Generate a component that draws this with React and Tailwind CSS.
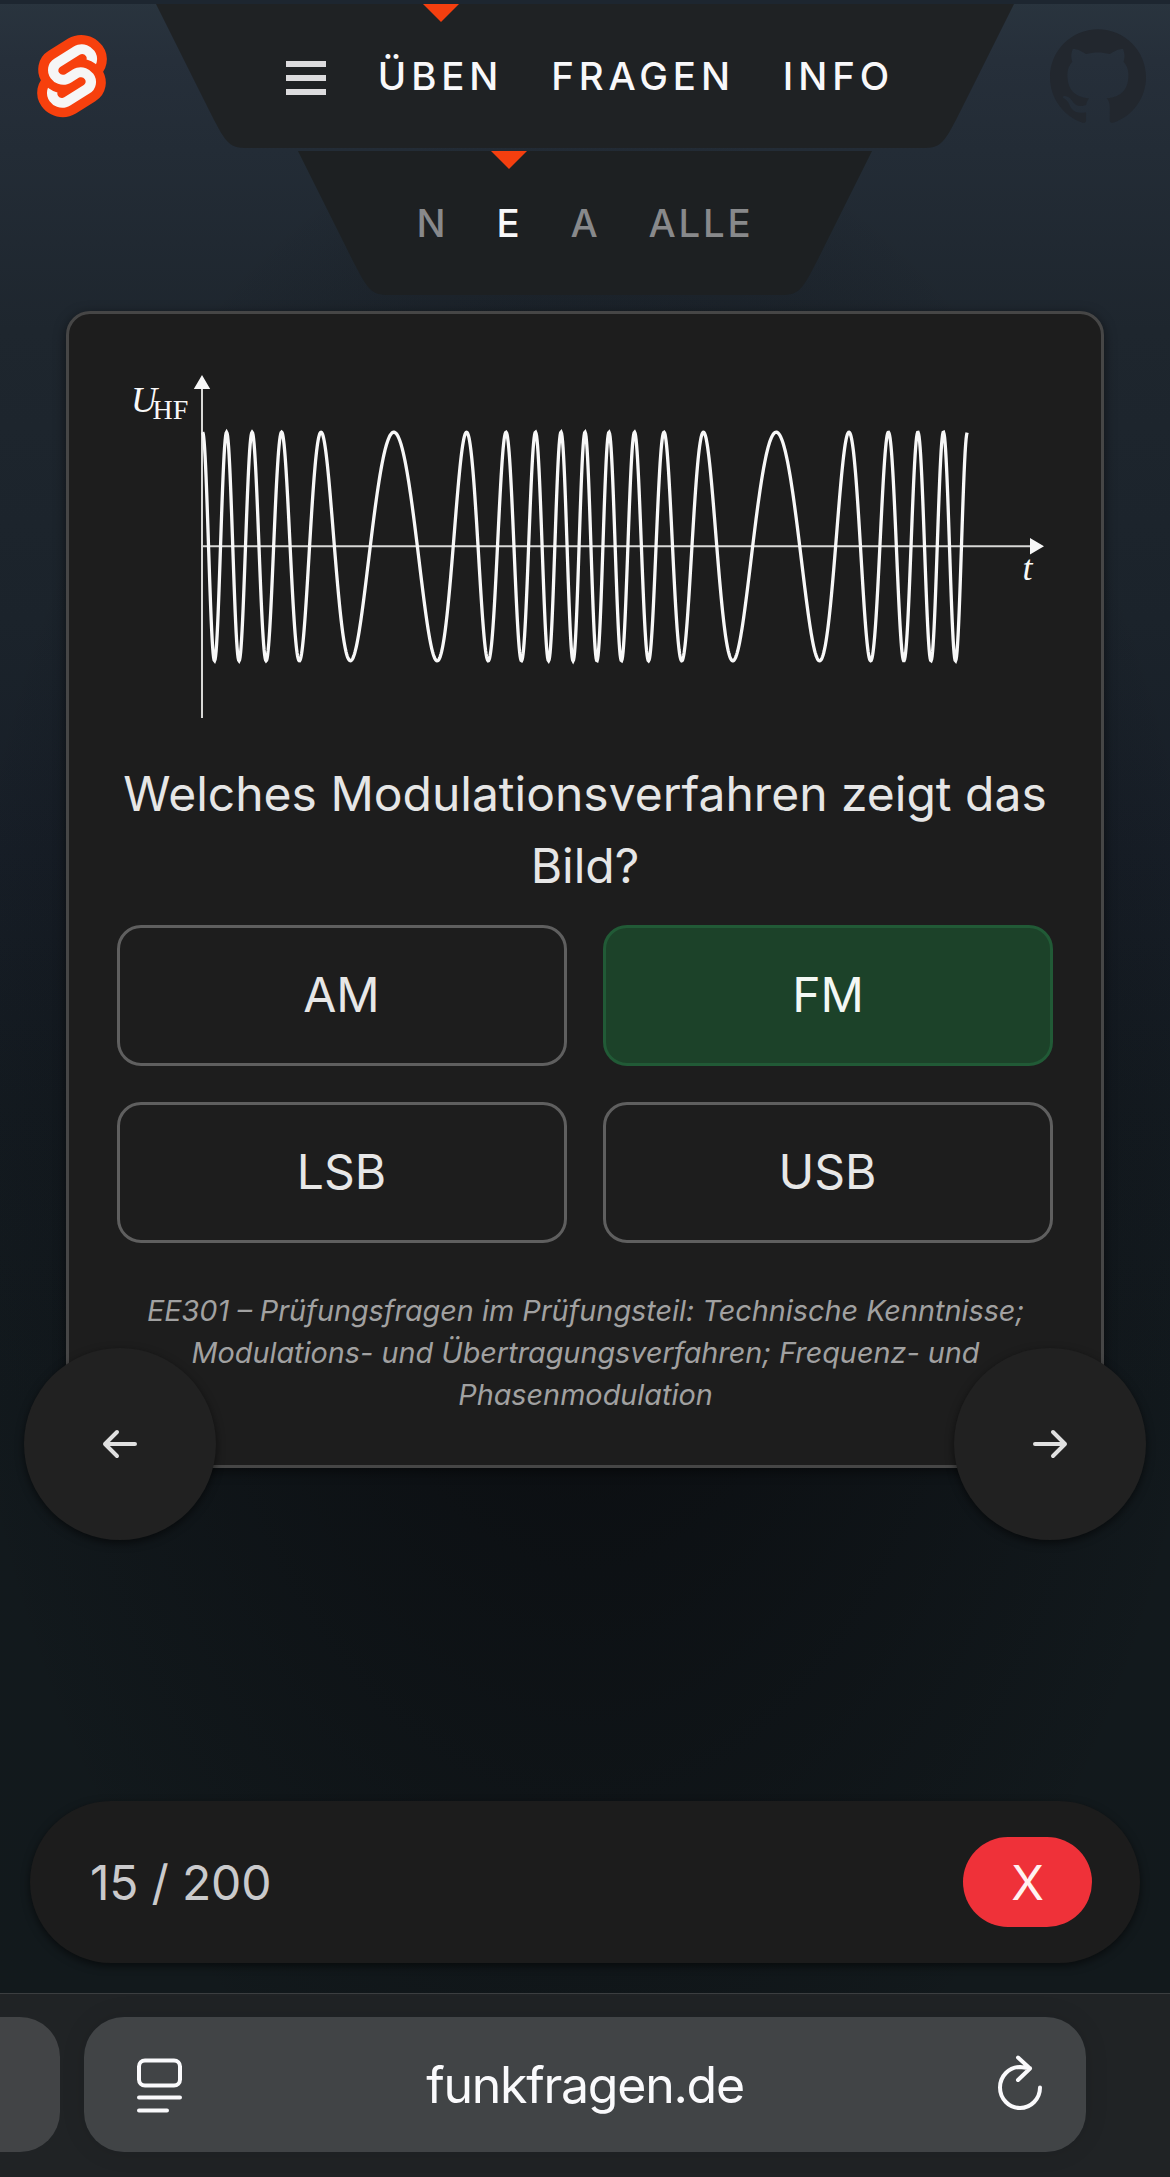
import { SiGithub } from "react-icons/si";

const ORIGIN_X = 202.6;
const PERIOD = 382.4;
const MID_Y = 546.5;
const AMPLITUDE = 114.3;

// Frequency-modulated carrier: ten oscillations per modulation period.
const wavePath = (() => {
  const points = [];
  for (let x = 0; x <= PERIOD * 2; x += 0.5) {
    const u = x / PERIOD;
    const phase = 2 * Math.PI * (10 * u + 0.97 * Math.sin(2 * Math.PI * u));
    points.push(`${(ORIGIN_X + x).toFixed(2)},${(MID_Y - AMPLITUDE * Math.cos(phase)).toFixed(2)}`);
  }
  return "M" + points.join("L");
})();

function SvelteLogo() {
  return (
    <svg viewBox="0 0 107 128" preserveAspectRatio="none" className="h-[94px] w-20">
      <path fill="#f7400d" d="M94.1566,22.8189c-10.4-14.8851-30.94-19.2971-45.7914-9.8348L22.2825,29.6078A29.9234,29.9234,0,0,0,8.7639,49.6506a31.5136,31.5136,0,0,0,3.1076,20.2318A30.0061,30.0061,0,0,0,7.3953,81.0653a31.8886,31.8886,0,0,0,5.4473,24.1157c10.4022,14.8865,30.9423,19.2966,45.7914,9.8348L84.7167,98.3921A29.9177,29.9177,0,0,0,98.2353,78.3493,31.5263,31.5263,0,0,0,95.13,58.117a30,30,0,0,0,4.4743-11.1824,31.88,31.88,0,0,0-5.4473-24.1157" />
      <path fill="#f6f6f6" d="M45.8171,106.5815A20.7182,20.7182,0,0,1,23.58,98.3389a19.1739,19.1739,0,0,1-3.2766-14.5025,18.1886,18.1886,0,0,1,.6233-2.4357l.4912-1.4978,1.3363.9815a33.6443,33.6443,0,0,0,10.203,5.0978l.9694.2941-.0893.9675a5.8474,5.8474,0,0,0,1.052,3.8781,6.2389,6.2389,0,0,0,6.6952,2.485,5.7449,5.7449,0,0,0,1.6021-.7041L69.27,76.281a5.4306,5.4306,0,0,0,2.4506-3.631,5.7948,5.7948,0,0,0-.9875-4.3712,6.2436,6.2436,0,0,0-6.6978-2.4864,5.7427,5.7427,0,0,0-1.6.7036l-9.9532,6.3449a19.0329,19.0329,0,0,1-5.2965,2.3259,20.7181,20.7181,0,0,1-22.2368-8.2427,19.1725,19.1725,0,0,1-3.2766-14.5024,17.9885,17.9885,0,0,1,8.13-12.0513L55.8833,23.7472a19.0038,19.0038,0,0,1,5.3-2.3287A20.7182,20.7182,0,0,1,83.42,29.6611a19.1739,19.1739,0,0,1,3.2766,14.5025,18.4,18.4,0,0,1-.6233,2.4357l-.4912,1.4978-1.3356-.98a33.6175,33.6175,0,0,0-10.2037-5.1l-.9694-.2942.0893-.9675a5.8588,5.8588,0,0,0-1.052-3.878,6.2389,6.2389,0,0,0-6.6952-2.485,5.7449,5.7449,0,0,0-1.6021.7041L37.73,51.719a5.4218,5.4218,0,0,0-2.4487,3.63,5.7862,5.7862,0,0,0,.9856,4.3717,6.2437,6.2437,0,0,0,6.6978,2.4864,5.7652,5.7652,0,0,0,1.602-.7041l9.9519-6.3425a18.978,18.978,0,0,1,5.2959-2.3278,20.7181,20.7181,0,0,1,22.2368,8.2427,19.1725,19.1725,0,0,1,3.2766,14.5024,17.9977,17.9977,0,0,1-8.13,12.0532L51.1167,104.2528a19.0038,19.0038,0,0,1-5.3,2.3287" />
    </svg>
  );
}

function Flank({ right, className }) {
  return (
    <svg viewBox="0 0 2 3" preserveAspectRatio="none" className={"h-36 w-24 shrink-0 " + className}>
      <path
        fill="currentColor"
        d={right ? "M0,0 L0,3 C0.5,3 0.5,3 1,2 L2,0 Z" : "M0,0 L1,2 C1.5,3 1.5,3 2,3 L2,0 Z"}
      />
    </svg>
  );
}

function NavItem({ label, active, muted }) {
  return (
    <li className="relative flex h-full items-center px-6 pt-px">
      {active && (
        <span className="absolute top-0 left-1/2 -ml-[18px] h-0 w-0 border-x-[18px] border-t-[18px] border-x-transparent border-t-[#f43f0f]" />
      )}
      <a className={muted ? "text-[#88898b]" : "text-[#f8f8fa]"}>{label}</a>
    </li>
  );
}

function Answer({ label, correct }) {
  return (
    <button
      className={
        "flex h-[141px] items-center justify-center rounded-3xl border-[3px] pb-[2px] text-[48px] " +
        (correct ? "border-[#215a36] bg-[#1c4229] text-[#f3f8f4]" : "border-[#5f5f5f] pr-px text-[#e7e7e7]")
      }
    >
      {label}
    </button>
  );
}

function RoundButton({ right }) {
  return (
    <button
      className={
        "absolute top-[1348px] flex h-48 w-48 items-center justify-center rounded-full bg-[#212121] shadow-[0_3px_9px_rgba(0,0,0,0.55)] " +
        (right ? "right-6" : "left-6")
      }
    >
      <svg viewBox="0 0 36 32" className="h-8 w-9" fill="none" stroke="#e0e0e0" strokeWidth="4" strokeLinecap="round" strokeLinejoin="round">
        {right ? <path d="M3 16H33M21 4L33 16L21 28" /> : <path d="M33 16H3M15 4L3 16L15 28" />}
      </svg>
    </button>
  );
}

export default function App() {
  return (
    <div className="relative flex h-[2177px] w-[1170px] flex-col overflow-hidden bg-[radial-gradient(640px_1050px_at_50%_1150px,rgba(8,8,11,0.85)_0%,rgba(8,9,12,0.5)_40%,rgba(8,9,12,0)_100%),linear-gradient(180deg,#29343e_0px,#262f3a_60px,#232c36_150px,#1e262e_330px,#1b232b_620px,#171e27_850px,#141b21_1100px,#12191d_1400px,#12191c_2000px)] font-[Inter,sans-serif]">
      <div className="h-1 shrink-0 bg-[#1d2630]" />
      <header className="flex h-36 shrink-0">
        <div className="flex w-36 items-center justify-center">
          <SvelteLogo />
        </div>
        <nav className="ml-3 flex text-[38.4px] font-medium tracking-[4.9px]">
          <Flank className="text-[#1f2224]" />
          <ul className="flex h-36 w-[666px] items-center justify-end bg-[#1f2224]">
            <li className="mr-auto ml-[34px] flex w-10 flex-col gap-2 pt-[3px]">
              <span className="h-1.5 bg-[#dcdcde]" />
              <span className="h-1.5 bg-[#dcdcde]" />
              <span className="h-1.5 bg-[#dcdcde]" />
            </li>
            <NavItem label="ÜBEN" active />
            <NavItem label="FRAGEN" />
            <NavItem label="INFO" />
          </ul>
          <Flank right className="text-[#1f2224]" />
        </nav>
        <div className="mr-6 ml-auto flex w-24 items-center justify-center text-[#22272e]">
          <SiGithub size={96} />
        </div>
      </header>

      <nav className="mt-[3px] flex h-36 shrink-0 justify-center text-[38.4px] font-medium tracking-[2.8px]">
        <Flank className="text-[#1d2022]" />
        <ul className="-mx-px flex h-36 items-center bg-[#1d2022]">
          <NavItem label="N" muted />
          <NavItem label="E" active />
          <NavItem label="A" muted />
          <NavItem label="ALLE" muted />
        </ul>
        <Flank right className="text-[#1d2022]" />
      </nav>

      <main className="mx-[66px] mt-4 h-[1157px] shrink-0 rounded-3xl border-[3px] border-[#464646] bg-[#1d1d1d] px-12 shadow-[0_3px_12px_rgba(0,0,0,0.5)]">
        <svg viewBox="117 314 936 444" className="h-[444px] w-[936px]">
          <g stroke="#d8d8d6" strokeWidth="2">
            <path d="M202 388V718" />
            <path d="M202 546.3H1031" />
          </g>
          <path fill="#f8f8f8" d="M202 375L210.200 389H193.800ZM1044 546.300L1030 554.500V538Z" />
          <path d={wavePath} fill="none" stroke="#f8f8f8" strokeWidth="3.300" />
          <g fill="#f8f8f8" className="font-['Liberation_Serif',serif]">
            <text x="131" y="411.500" fontSize="36" fontStyle="italic">
              U<tspan dx="-4.500" dy="7.300" fontSize="28" fontStyle="normal">HF</tspan>
            </text>
            <text x="1022.500" y="580" fontSize="36" fontStyle="italic">t</text>
          </g>
        </svg>
        <p className="text-center text-[48px] leading-[72px] text-[#e6e6e6]">
          Welches Modulationsverfahren zeigt das
          <br />
          Bild?
        </p>
        <div className="mt-[23px] grid grid-cols-2 gap-9">
          <Answer label="AM" />
          <Answer label="FM" correct />
          <Answer label="LSB" />
          <Answer label="USB" />
        </div>
        <p className="mt-[47px] pl-px text-center text-[28.8px] leading-[42px] text-[#a1a1a1] italic">
          EE301 – Prüfungsfragen im Prüfungsteil: Technische Kenntnisse;
          <br />
          Modulations- und Übertragungsverfahren; Frequenz- und
          <br />
          Phasenmodulation
        </p>
      </main>
      <RoundButton />
      <RoundButton right />

      <section className="mx-[30px] mt-auto mb-[30px] flex h-[162px] shrink-0 items-center justify-between rounded-full bg-[#1c1c1c] pr-12 pl-[60px] text-[48px] shadow-[0_3px_9px_rgba(0,0,0,0.55)]">
        <span className="pt-px tracking-[-0.2px] text-[#cacacc]">15 / 200</span>
        <button className="flex h-[90px] w-[129px] items-center justify-center rounded-full bg-[#ef3139] pt-px text-[#fff2f2]">X</button>
      </section>

      <footer className="flex h-[184px] shrink-0 gap-6 border-t border-[#3b3e40] bg-[#202325] pt-[23px]">
        <div className="h-[135px] w-[60px] rounded-r-[40px] bg-[#424446]" />
        <div className="flex h-[135px] w-[1002px] items-center justify-between rounded-[40px] bg-[#414446] px-[42px] text-[#fafafc] shadow-[0_0_24px_rgba(0,0,0,0.1)]">
          <svg viewBox="0 0 64 64" className="h-16 w-16" fill="none" stroke="currentColor" strokeWidth="4" strokeLinecap="round">
            <rect x="13" y="7.500" width="41" height="25" rx="6" />
            <path d="M13 44.500H54M13 57.500H41" />
          </svg>
          <span className="pt-[2px] text-[50px] tracking-[-1.25px]">funkfragen.de</span>
          <svg viewBox="0 0 64 64" className="h-16 w-16 translate-x-[9px]" fill="none" stroke="currentColor" strokeWidth="4" strokeLinecap="round" strokeLinejoin="round">
            <path d="M51 34.500A20 20.500 0 1 1 31 14L41 15.300M29 4.500L41 15.500L29 27" />
          </svg>
        </div>
      </footer>
    </div>
  );
}
